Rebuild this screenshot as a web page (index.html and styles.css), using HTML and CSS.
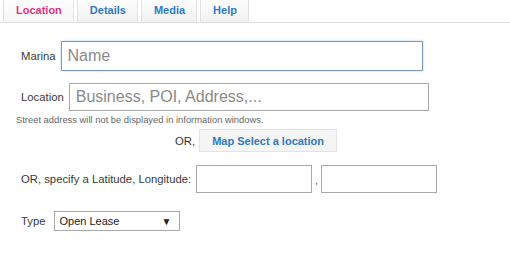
FILE: index.html
```
<!DOCTYPE html>
<html lang="en">
<head>
    <meta charset="UTF-8">
    <title>Add Marina</title>
    <link rel="stylesheet" href="styles.css">
</head>
<body>
    <ul class="tabs">
        <li class="tab active">Location</li>
        <li class="tab">Details</li>
        <li class="tab">Media</li>
        <li class="tab">Help</li>
    </ul>

    <form class="panel">
        <div class="row row-name">
            <label class="label">Marina</label>
            <input class="field field-name" type="text" placeholder="Name">
        </div>
        <div class="row row-location">
            <label class="label">Location</label>
            <input class="field field-location" type="text" placeholder="Business, POI, Address,...">
        </div>
        <div class="hint">Street address will not be displayed in information windows.</div>
        <div class="row row-or">
            <span class="or-text">OR,</span>
            <button type="button" class="map-button">Map Select a location</button>
        </div>
        <div class="row row-latlng">
            <label class="label">OR, specify a Latitude, Longitude:</label>
            <input class="field field-coord" type="text">
            <span class="comma">,</span>
            <input class="field field-coord" type="text">
        </div>
        <div class="row row-type">
            <label class="label label-type">Type</label>
            <div class="select">
                <span>Open Lease</span>
                <span class="arrow">&#9660;</span>
            </div>
        </div>
    </form>
</body>
</html>
```

FILE: styles.css
```
body, html {
    margin: 0;
    padding: 0;
    background: #fff;
    font-family: "Liberation Sans", Arial, sans-serif;
    font-size: 11px;
    color: #333;
}

/* Tabs */
.tabs {
    display: flex;
    gap: 3px;
    margin: 0;
    padding: 0 0 0 3px;
    list-style: none;
    height: 22px;
    border-bottom: 1px solid #dedede;
}

.tab {
    box-sizing: border-box;
    height: 22px;
    padding: 3px 11px 0 12px;
    border: 1px solid #e2e2e2;
    border-top: none;
    border-bottom: none;
    background: linear-gradient(#fdfdfd, #f1f1f1);
    color: #2f78c6;
    font-weight: bold;
    font-size: 11px;
    line-height: 15px;
}

.tab.active {
    color: #e0347f;
    background: linear-gradient(#fefefe, #f6f6f6);
}

/* Form */
.panel {
    padding: 18px 0 0 16px;
}

.row {
    display: flex;
    align-items: center;
    gap: 5px;
    padding-left: 5px;
}

.label {
    color: #3a3a3a;
    font-size: 11.3px;
}

.field {
    box-sizing: border-box;
    margin: 0;
    border: 1px solid #a9a9a9;
    background: #fff;
    font-family: "Liberation Sans", Arial, sans-serif;
    outline: none;
}

.field::placeholder {
    color: #8a8a8a;
}

.field-name {
    width: 362px;
    height: 30px;
    padding: 0 6px;
    font-size: 16px;
    border-color: #7f9db9;
    box-shadow: 0 0 2px rgba(90, 140, 200, 0.5);
}

.row-location {
    margin-top: 12px;
}

.field-location {
    width: 360px;
    height: 28px;
    padding: 0 6px;
    font-size: 16px;
}

.hint {
    margin-top: 3px;
    font-size: 9.4px;
    line-height: 12px;
    color: #666;
}

.row-or {
    margin-top: 3px;
    padding-left: 159px;
    gap: 4px;
}

.or-text {
    font-size: 11.3px;
}

.map-button {
    box-sizing: border-box;
    width: 138px;
    height: 23px;
    border: 1px solid #e3e3e3;
    background: #f5f5f5;
    color: #2f78c6;
    font-family: "Liberation Sans", Arial, sans-serif;
    font-weight: bold;
    font-size: 11px;
    padding: 0;
}

.row-latlng {
    margin-top: 13px;
}

.field-coord {
    width: 116px;
    height: 28px;
}

.comma {
    margin: 4px -2px 0;
    font-size: 9px;
}

.row-type {
    margin-top: 18px;
    gap: 8px;
}

.select {
    box-sizing: border-box;
    display: flex;
    justify-content: space-between;
    align-items: center;
    width: 126px;
    height: 20px;
    padding: 0 7px 0 5px;
    border: 1px solid #a9a9a9;
    color: #222;
}

.arrow {
    font-size: 10px;
}
```
